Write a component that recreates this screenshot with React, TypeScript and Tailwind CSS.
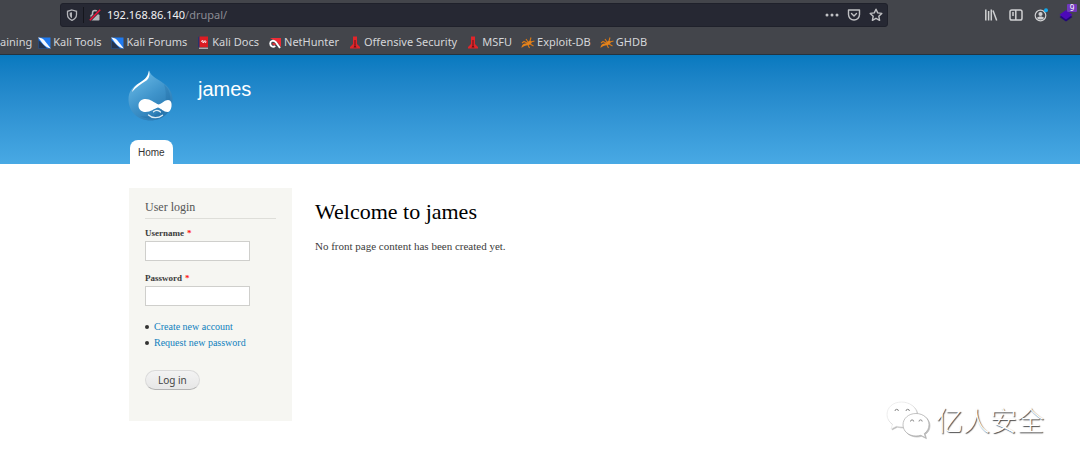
import React from "react";

function KaliIcon() {
  return (
    <svg viewBox="0 0 13 12" className="h-3 w-[13px] shrink-0" aria-hidden="true">
      <rect x="0.5" y="0.5" width="12" height="11" fill="#1f7af0" />
      <path d="M0.5 3v8.500h8.500z" fill="#26344c" />
      <path d="M0 0.500c2.500 0 4.800 1 6.300 2.700l6.500 8.300c-3.500-.8-6.500-2.600-8.300-5.200C3.200 4.500 2 2.500 0 .5z" fill="#f4f7fb" />
    </svg>
  );
}

function DocsIcon() {
  return (
    <svg viewBox="0 0 12 13" className="h-[13px] w-3 shrink-0" aria-hidden="true">
      <path d="M1 1l2-.5V12L1 11z" fill="#26346e" />
      <rect x="2.500" y="0.500" width="8.500" height="10.800" fill="#dc1c23" />
      <path d="M2 12.200h9" stroke="#e3d9d9" />
      <path d="M4 5.500l2-1v2.500l2-2.500v2l1.500-.7" fill="none" stroke="#fff" strokeWidth="0.900" />
    </svg>
  );
}

function HunterIcon() {
  return (
    <svg viewBox="0 0 12 12" className="size-3 shrink-0" aria-hidden="true">
      <path d="M1 1h11v9L8 5z" fill="#ee2b35" />
      <path d="M11 11L6.800 5.200C4.500 2.700 1.200 3.800 1.200 6.600c0 2.800 3 4.200 5 2.200" fill="none" stroke="#fff" strokeWidth="1.900" />
      <path d="M3.500 6.500l3 1.200" stroke="#ee2b35" strokeWidth="1.800" />
    </svg>
  );
}

function TowerIcon() {
  return (
    <svg viewBox="0 0 10 13" className="h-[13px] w-2.5 shrink-0" aria-hidden="true">
      <path d="M3 .5h4v7.500l3 3v1.500H0V11l3-3z" fill="#e0252a" />
      <path d="M5 4v5" stroke="#651014" strokeWidth="1" />
      <path d="M3.500 11.500l1.500-3 1.500 3z" fill="#651014" />
    </svg>
  );
}

function BugIcon() {
  return (
    <svg viewBox="0 0 14 12" className="h-3 w-3.5 shrink-0" aria-hidden="true">
      <path d="M.5 11c0-3 2-4.800 4.500-4.500l3-2.500c1.500-1 3.500.5 2.500 2.200L7.500 8.500C5.500 8 3 9 .5 11z" fill="#e5831c" />
      <path d="M6 6L3 4.500 1 6M7 5L5 2M9 4l1-3.500M10 5l3.500-1M9 7l3.500 2M7 8l1.500 3" stroke="#dc7a16" strokeWidth="1.100" fill="none" />
    </svg>
  );
}

const bookmarks = [
  { name: "Kali Tools", icon: <KaliIcon /> },
  { name: "Kali Forums", icon: <KaliIcon /> },
  { name: "Kali Docs", icon: <DocsIcon /> },
  { name: "NetHunter", icon: <HunterIcon /> },
  { name: "Offensive Security", icon: <TowerIcon /> },
  { name: "MSFU", icon: <TowerIcon /> },
  { name: "Exploit-DB", icon: <BugIcon /> },
  { name: "GHDB", icon: <BugIcon /> },
];

function AddressBar() {
  return (
    <div className="flex h-6 min-w-0 flex-1 items-center rounded-[3px] border border-[#1f212b] bg-[#262833] pr-1">
      <svg viewBox="0 0 12 12" className="ml-[5px] size-3 shrink-0" aria-hidden="true">
        <path d="M6 1L10.500 2.300V5.500C10.500 8.300 8.500 10.300 6 11.300 3.500 10.300 1.500 8.300 1.500 5.500V2.300z" fill="none" stroke="#b4b5ba" strokeWidth="1.300" />
        <path d="M6 3.200v6C4.500 8.400 3.700 7.300 3.700 5.600V3.800z" fill="#b4b5ba" />
      </svg>
      <span className="mx-[5px] h-4 w-px bg-[#15161d]" />
      <svg viewBox="0 0 12 12" className="size-3 shrink-0" aria-hidden="true">
        <path d="M3.500 6V4a2.500 2.500 0 0 1 5 0v2" fill="none" stroke="#b4b5ba" strokeWidth="1.500" />
        <rect x="1.500" y="5.500" width="9" height="6" rx="0.800" fill="#b4b5ba" />
        <path d="M1 11L11 1" stroke="#262833" strokeWidth="3" />
        <path d="M.8 11.200L11.200.8" stroke="#f0133c" strokeWidth="1.600" />
      </svg>
      <div className="ml-1.5 flex-1 text-[11px] text-[#f2f2f4]">
        192.168.86.140<span className="text-[#8b8c93]">/drupal/</span>
      </div>
      <div className="flex shrink-0 items-center gap-2">
        <button aria-label="Page actions">
          <svg viewBox="0 0 14 14" className="size-3.5" fill="#c0c1c4">
            <circle cx="2" cy="7" r="1.500" /><circle cx="7" cy="7" r="1.500" /><circle cx="12" cy="7" r="1.500" />
          </svg>
        </button>
        <button aria-label="Save to Pocket">
          <svg viewBox="0 0 14 14" className="size-3.5" fill="none" stroke="#c0c1c4" strokeWidth="1.400" strokeLinecap="round" strokeLinejoin="round">
            <path d="M1.500 2h11v4.500a5.500 5.500 0 0 1-11 0z" /><path d="M4.500 5.500L7 8l2.500-2.500" />
          </svg>
        </button>
        <button aria-label="Bookmark this page">
          <svg viewBox="0 0 14 14" className="size-3.5" fill="none" stroke="#c0c1c4" strokeWidth="1.400" strokeLinejoin="round">
            <path d="M7 1.200l1.700 3.700 4.100.5-3 2.800.8 4.100L7 10.300l-3.600 2 .8-4.100-3-2.800 4.100-.5z" />
          </svg>
        </button>
      </div>
    </div>
  );
}

function BrowserChrome() {
  return (
    <div className="border-b border-[#24333f] bg-[#43454b] font-['Noto_Sans','Open_Sans',sans-serif] text-[#d5d6d9]">
      <div className="flex items-center pt-[3px] pr-[7px] pl-[60px]">
        <AddressBar />
        <div className="ml-24 flex shrink-0 items-center gap-[11px]">
          <button aria-label="Library">
            <svg viewBox="0 0 14 14" className="size-3.5" fill="none" stroke="#cfd0d2" strokeWidth="1.500">
              <path d="M1.800 1.500v11M4.600 3v9.500M7.300 1.500v11M9 2.500l3.700 10" />
            </svg>
          </button>
          <button aria-label="Sidebars">
            <svg viewBox="0 0 14 14" className="size-3.5" fill="none" stroke="#cfd0d2" strokeWidth="1.500">
              <rect x="1" y="2" width="12" height="10" rx="1.800" /><path d="M6.800 2v10M3 5h2M3 7h2" />
            </svg>
          </button>
          <button aria-label="Account">
            <svg viewBox="0 0 14 14" className="size-3.5">
              <circle cx="6.500" cy="7.500" r="5.300" fill="none" stroke="#cfd0d2" strokeWidth="1.200" />
              <circle cx="6.500" cy="6" r="2.100" fill="#cfd0d2" />
              <path d="M3 10c1-2 6-2 7 0-1.500 2-5.500 2-7 0z" fill="#cfd0d2" />
              <circle cx="12" cy="2.300" r="2" fill="#10a9ee" />
            </svg>
          </button>
          <button aria-label="Extension, 9 items" className="relative">
            <svg viewBox="0 0 14 14" className="size-3.5">
              <path d="M.5 9L7 5l6.500 4L7 13.500z" fill="#22077a" />
              <path d="M.5 6.800L7 2l6.500 4.800L7 11.500z" fill="#4c09b8" />
            </svg>
            <span className="absolute -top-1 left-2 flex h-2 w-2.5 items-center justify-center rounded-[1px] bg-[#7139bd] text-[8px] text-white">9</span>
          </button>
        </div>
      </div>
      <nav className="flex h-[27px] items-center gap-[9px] overflow-hidden pt-1 text-[11px] whitespace-nowrap">
        <a href="#training" className="-mr-1">aining</a>
        {bookmarks.map((b) => (
          <a key={b.name} href="#bookmark" className="flex items-center gap-0.5">
            <span className="flex w-3.5 justify-center">{b.icon}</span>
            {b.name}
          </a>
        ))}
      </nav>
    </div>
  );
}

function DrupalLogo() {
  return (
    <svg viewBox="0 0 46 52" className="h-[52px] w-[46px]" role="img" aria-label="Drupal">
      <defs>
        <linearGradient id="drop" x1="0.200" y1="0.200" x2="0.700" y2="1">
          <stop offset="0" stopColor="#5fb0df" />
          <stop offset="0.450" stopColor="#3f94cb" />
          <stop offset="1" stopColor="#2877b0" />
        </linearGradient>
      </defs>
      <path d="M21 .5C23.500 7 30 9 35 13c6 4 9.500 9.500 9.500 16.500 0 12.500-10 21-22 21S.5 42 .5 29.500c0-8 4-12.500 10-16C15.500 10.500 19.500 8 21 .5z" fill="url(#drop)" />
      <path d="M36 14c8 7 9 22 0 29-7 6-17 7-24 3 14 2 22-4 25-13 1.500-6 1-13-1-19z" fill="#14598f" opacity="0.200" />
      <path d="M21 .5c1 4 .5 7.500-2.500 10C14 13.500 8 17 4 22 5.500 16.500 9.500 14 13.500 11.500 17.500 9 20 6.500 21 .5z" fill="#fff" />
      <path d="M17.500 29c5 0 8.500 3.500 13 5.500 4.500-1.500 6-4.500 9.500-4.500 3 0 4 3 3.500 6.500-.5 3.500-2 5.500-4 5.500-4 0-6-3.500-9.500-4.500-4 1-7 4.500-12.500 4.500-4 0-7-2.500-7-6.500s3-6.500 7-6.500z" fill="#fff" />
      <path d="M25.500 41.800c2-2 5-2 7 .2M20.500 45c3.500 3.500 10 3.500 14 .2" fill="none" stroke="#dcebf5" strokeWidth="1.300" strokeLinecap="round" />
    </svg>
  );
}

function LoginBlock() {
  const input = "block h-5 w-[105px] border border-[#cfcfcc] bg-white px-1 text-[10px] outline-none";
  const label = "flex gap-[3px] text-[9px] leading-4 font-bold";
  return (
    <aside className="w-[163px] shrink-0 bg-[#f6f6f2] px-4 pt-[11px] pb-[31px] text-[#3b3b3b]">
      <h2 className="border-b border-[#deded9] pb-[3px] text-[12px] leading-4 text-[#555]">User login</h2>
      <form onSubmit={(e) => e.preventDefault()}>
        <div className="mt-1.5">
          <label htmlFor="username" className={label}>Username <span className="text-[#ff1515]">*</span></label>
          <input id="username" type="text" className={input} />
        </div>
        <div className="mt-[9px]">
          <label htmlFor="password" className={label}>Password <span className="text-[#ff1515]">*</span></label>
          <input id="password" type="password" className={input} />
        </div>
        <ul className="mt-[13px] text-[10px] leading-4 text-[#0f7fbd]">
          <li className="flex items-center gap-[5px]"><span className="size-1 shrink-0 rounded-full bg-[#333]" /><a href="#register">Create new account</a></li>
          <li className="flex items-center gap-[5px]"><span className="size-1 shrink-0 rounded-full bg-[#333]" /><a href="#reset">Request new password</a></li>
        </ul>
        <button type="submit" className="mt-[19px] flex h-5 items-center rounded-full border border-[#dadada] border-b-[#b4b4b4] bg-linear-to-b from-[#f3f3f3] to-[#e7e7e7] px-3 font-['Noto_Sans',sans-serif] text-[10px] text-[#444]">
          Log in
        </button>
      </form>
    </aside>
  );
}

function Watermark() {
  return (
    <div className="absolute top-[400px] right-[36px] flex items-center gap-1.5 font-['Noto_Sans_CJK_SC',sans-serif] text-[27px] leading-10 font-light text-white">
      <svg viewBox="0 0 44 38" className="h-[38px] w-11 drop-shadow-[1px_1px_0px_#bbb]" aria-hidden="true">
        <path d="M15.500 1C7 1 1 6.500 1 13.500c0 4 2 7.500 5.500 9.800L5 28l5.500-2.800c2 .6 4 .8 6 .8C25 26 31 20.500 31 13.500S24 1 15.500 1z" fill="#fff" stroke="#ddd" strokeWidth="0.500" />
        <path d="M30 12.500c-7.500 0-13 5-13 11.300S22.500 35 30 35c1.700 0 3.300-.3 4.800-.7l4.700 2.400-1.200-4.200c3-2 4.700-5.200 4.700-8.700 0-6.300-5.500-11.300-13-11.300z" fill="#fff" stroke="#aaa" strokeWidth="0.700" />
        <path d="M9 10a1.700 1.700 0 0 1 3.400 0M20 10a1.700 1.700 0 0 1 3.400 0M24.500 20.500a1.600 1.600 0 0 1 3.200 0M33 20.500a1.600 1.600 0 0 1 3.200 0" fill="none" stroke="#888" strokeWidth="1" />
      </svg>
      <span className="[text-shadow:1px_1px_1px_#444]">亿人安全</span>
    </div>
  );
}

export default function App() {
  return (
    <div className="relative min-h-screen overflow-hidden bg-white font-['Liberation_Serif',serif]">
      <BrowserChrome />
      <header className="bg-linear-to-b from-[#0779bf] to-[#48a9e4]">
        <div className="mx-auto max-w-[824px] pt-[15px] font-['Liberation_Sans',sans-serif]">
          <div className="flex items-start gap-6">
            <a href="#home"><DrupalLogo /></a>
            <a href="#home" className="pt-[5px] text-[20px] leading-7 text-white">james</a>
          </div>
          <nav className="mt-[18px] flex pl-0.5">
            <a href="#home" className="flex h-6 items-center rounded-t-lg bg-white px-2 text-[10px] text-[#333]">Home</a>
          </nav>
        </div>
      </header>
      <div className="mx-auto flex max-w-[822px] items-start gap-[23px] pt-6">
        <LoginBlock />
        <main className="min-w-0 flex-1 pt-2.5">
          <h1 className="text-[22px] leading-7 text-black">Welcome to james</h1>
          <p className="mt-3 text-[11px] leading-4 text-[#3b3b3b]">No front page content has been created yet.</p>
        </main>
      </div>
      <Watermark />
    </div>
  );
}
